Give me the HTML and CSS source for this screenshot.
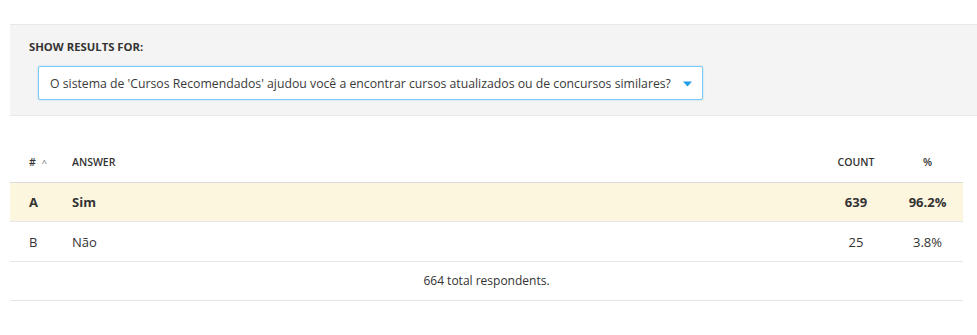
FILE: index.html
```html
<!DOCTYPE html>
<html lang="en">
<head>
    <meta charset="UTF-8">
    <meta name="viewport" content="width=device-width, initial-scale=1.0">
    <title>Results</title>
    <link rel="stylesheet" href="styles.css">
</head>
<body>
    <!-- Filter panel -->
    <div class="filter-panel">
        <div class="filter-label">Show results for:</div>
        <div class="select-box">
            <span class="select-text">O sistema de 'Cursos Recomendados' ajudou você a encontrar cursos atualizados ou de concursos similares?</span>
            <svg class="select-arrow" width="9" height="6" viewBox="0 0 9 6"><path d="M0 0.5h9L4.5 5.5z" fill="#1f9be8"/></svg>
        </div>
    </div>

    <!-- Results table -->
    <div class="results">
        <div class="row head">
            <div class="cell">#<span class="sort">^</span></div>
            <div class="cell">Answer</div>
            <div class="cell center">Count</div>
            <div class="cell center">%</div>
        </div>
        <div class="row top-answer">
            <div class="cell">A</div>
            <div class="cell">Sim</div>
            <div class="cell center">639</div>
            <div class="cell center">96.2%</div>
        </div>
        <div class="row">
            <div class="cell">B</div>
            <div class="cell">Não</div>
            <div class="cell center">25</div>
            <div class="cell center">3.8%</div>
        </div>
        <div class="total">664 total respondents.</div>
    </div>
</body>
</html>
```

FILE: styles.css
```css
body {
    margin: 0;
    background: #fff;
    color: #333;
    font-family: "Open Sans", Arial, sans-serif;
}

/* Filter panel */
.filter-panel {
    margin: 24px 0 0 10px;
    padding: 15px 19px;
    background: #f4f4f4;
    border-top: 1px solid #e8e8e8;
    border-bottom: 1px solid #e8e8e8;
}

.filter-label {
    font-size: 11.3px;
    line-height: 14px;
    font-weight: 700;
    text-transform: uppercase;
}

.select-box {
    margin: 12px 0 0 9px;
    width: 665px;
    height: 34px;
    box-sizing: border-box;
    display: flex;
    align-items: center;
    justify-content: space-between;
    padding: 0 10px 0 11px;
    background: #fff;
    border: 1px solid #7ccbf6;
    border-radius: 2px;
    box-shadow: 0 0 2px rgba(60, 170, 240, 0.4);
}

.select-text {
    font-size: 12.25px;
    white-space: nowrap;
    color: #3a3a3a;
}

.select-arrow {
    margin-top: 1px;
}

/* Results table */
.results {
    margin: 26px 0 0 10px;
    width: 953px;
}

.row {
    display: grid;
    grid-template-columns: 62px 1fr 72px 71px;
    height: 39px;
    align-items: center;
    border-bottom: 1px solid #e6e6e6;
    font-size: 13px;
}

.cell:first-child {
    padding-left: 19px;
}

.center {
    text-align: center;
}

.head {
    height: 40px;
    border-bottom: 1px solid #dcdcdc;
    font-size: 10.5px;
    font-weight: 600;
    text-transform: uppercase;
}

.sort {
    margin-left: 6px;
    font-size: 9px;
    font-weight: 400;
    color: #666;
}

.top-answer {
    height: 38px;
    background: #fdf6df;
    font-weight: 700;
}

.total {
    height: 38px;
    line-height: 38px;
    text-align: center;
    font-size: 12px;
    border-bottom: 1px solid #e6e6e6;
}
```
